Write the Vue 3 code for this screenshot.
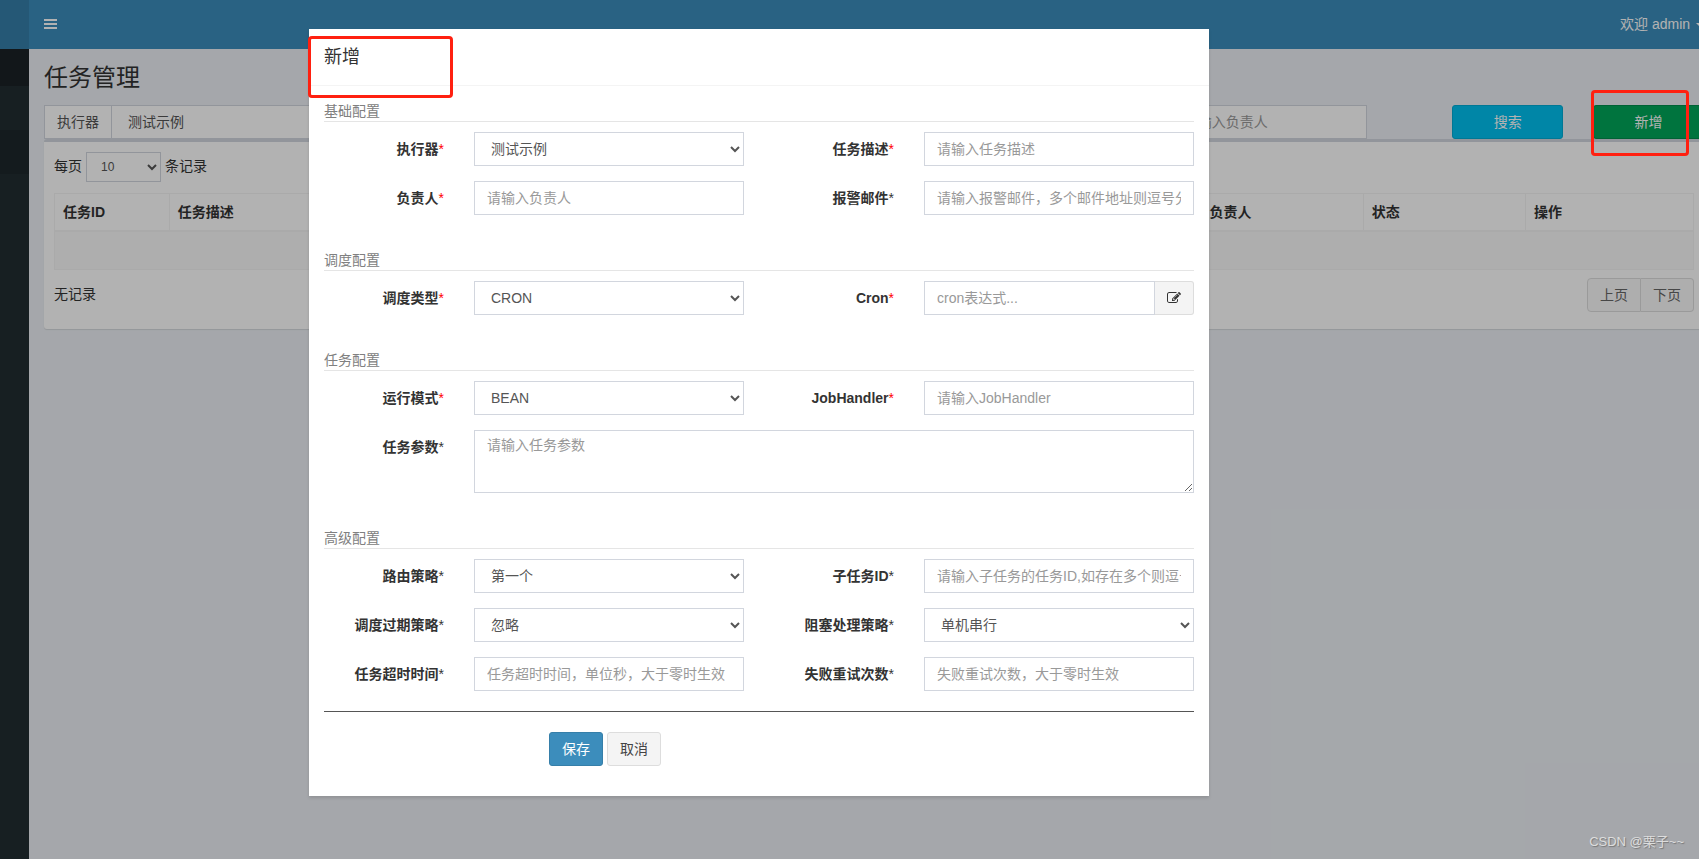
<script setup>
import { ref } from 'vue'

const columns = [
  { title: '任务ID', width: '7%' },
  { title: '任务描述', width: '25%' },
  { title: '调度类型', width: '16%' },
  { title: '运行模式', width: '22%' },
  { title: '负责人', width: '9.9%' },
  { title: '状态', width: '9.9%' },
  { title: '操作', width: '10.2%' }
]

const sections = [
  {
    title: '基础配置',
    fields: [
      { id: 'group', label: '执行器', required: true, type: 'select', option: '测试示例' },
      { id: 'desc', label: '任务描述', required: true, type: 'text', hint: '请输入任务描述' },
      { id: 'author', label: '负责人', required: true, type: 'text', hint: '请输入负责人' },
      { id: 'email', label: '报警邮件', type: 'text', hint: '请输入报警邮件，多个邮件地址则逗号分隔' }
    ]
  },
  {
    title: '调度配置',
    fields: [
      { id: 'schedule', label: '调度类型', required: true, type: 'select', option: 'CRON' },
      { id: 'cron', label: 'Cron', required: true, type: 'cron', hint: 'cron表达式...' }
    ]
  },
  {
    title: '任务配置',
    fields: [
      { id: 'mode', label: '运行模式', required: true, type: 'select', option: 'BEAN' },
      { id: 'handler', label: 'JobHandler', required: true, type: 'text', hint: '请输入JobHandler' },
      { id: 'param', label: '任务参数', type: 'textarea', hint: '请输入任务参数' }
    ]
  },
  {
    title: '高级配置',
    fields: [
      { id: 'route', label: '路由策略', type: 'select', option: '第一个' },
      { id: 'child', label: '子任务ID', type: 'text', hint: '请输入子任务的任务ID,如存在多个则逗号分隔' },
      { id: 'misfire', label: '调度过期策略', type: 'select', option: '忽略' },
      { id: 'block', label: '阻塞处理策略', type: 'select', option: '单机串行' },
      { id: 'timeout', label: '任务超时时间', type: 'text', hint: '任务超时时间，单位秒，大于零时生效' },
      { id: 'retry', label: '失败重试次数', type: 'text', hint: '失败重试次数，大于零时生效' }
    ]
  }
]

const values = ref({})
</script>

<template>
  <div class="viewport">
    <div class="app">
      <header class="topbar">
        <div class="logo"></div>
        <nav class="navbar">
          <button class="toggle" type="button" aria-label="menu">
            <svg width="13" height="14" viewBox="0 0 13 14" fill="#fff">
              <rect y="2" width="13" height="2" /><rect y="6" width="13" height="2" /><rect y="10" width="13" height="2" />
            </svg>
          </button>
          <a class="user" href="#">欢迎 admin <span class="caret"></span></a>
        </nav>
      </header>

      <div class="body">
        <aside class="sidebar">
          <div class="side-head"></div>
          <div class="side-item"></div>
          <div class="side-item active"></div>
        </aside>

        <main class="content">
          <h1>任务管理</h1>
          <div class="filters">
            <div class="filter-group">
              <label class="addon" for="f-group">执行器</label>
              <select id="f-group" class="control"><option>测试示例</option></select>
            </div>
            <input class="control owner" type="text" placeholder="请输入负责人" aria-label="负责人" />
            <button class="btn info search" type="button">搜索</button>
            <button class="btn success add" type="button">新增</button>
          </div>

          <section class="box">
            <div class="length">
              <label for="len">每页</label>
              <select id="len" class="control small"><option>10</option></select>
              <span>条记录</span>
            </div>
            <table>
              <colgroup><col v-for="c in columns" :key="c.title" :style="{ width: c.width }" /></colgroup>
              <thead>
                <tr><th v-for="c in columns" :key="c.title">{{ c.title }}</th></tr>
              </thead>
              <tbody>
                <tr><td :colspan="columns.length">&nbsp;</td></tr>
              </tbody>
            </table>
            <div class="foot">
              <span>无记录</span>
              <div class="pager"><a href="#">上页</a><a href="#">下页</a></div>
            </div>
          </section>
        </main>
      </div>

      <div class="backdrop">
        <div class="modal" role="dialog" aria-labelledby="dlg-title">
          <div class="modal-head"><h4 id="dlg-title">新增</h4></div>
          <form class="modal-body" @submit.prevent>
            <div v-for="s in sections" :key="s.title" class="section">
              <p>{{ s.title }}</p>
              <div class="fields">
                <template v-for="f in s.fields" :key="f.id">
                  <label :for="f.id">{{ f.label }}<span class="star" :class="{ red: f.required }">*</span></label>
                  <select v-if="f.type === 'select'" :id="f.id" class="control"><option>{{ f.option }}</option></select>
                  <textarea v-else-if="f.type === 'textarea'" :id="f.id" v-model="values[f.id]" class="control wide" :placeholder="f.hint"></textarea>
                  <div v-else-if="f.type === 'cron'" class="cron">
                    <input :id="f.id" v-model="values[f.id]" class="control" type="text" :placeholder="f.hint" />
                    <button class="edit" type="button" aria-label="edit">
                      <svg width="14" height="14" viewBox="0 0 1792 1792" fill="#333">
                        <path d="M888 1184l116-116-152-152-116 116v56h96v96h56zm440-720q-16-16-33 1l-350 350q-17 17-1 33t33-1l350-350q17-17 1-33zm80 594v190q0 119-84.500 203.500t-203.500 84.500h-832q-119 0-203.500-84.500t-84.500-203.500v-832q0-119 84.500-203.500t203.500-84.500h832q63 0 117 25 15 7 18 23 3 17-9 29l-49 49q-14 14-32 8-23-6-45-6h-832q-66 0-113 47t-47 113v832q0 66 47 113t113 47h832q66 0 113-47t47-113v-126q0-13 9-22l64-64q15-15 35-7t20 29zm-96-738l288 288-672 672h-288v-288zm444 132l-92 92-288-288 92-92q28-28 68-28t68 28l152 152q28 28 28 68t-28 68z" />
                      </svg>
                    </button>
                  </div>
                  <input v-else :id="f.id" v-model="values[f.id]" class="control" type="text" :placeholder="f.hint" />
                </template>
              </div>
            </div>
            <hr />
            <div class="actions">
              <button class="btn primary" type="submit">保存</button>
              <button class="btn default" type="button">取消</button>
            </div>
          </form>
          <div class="mark mark-title"></div>
        </div>
      </div>
      <div class="mark mark-add"></div>
    </div>
    <div class="watermark">CSDN @栗子~~</div>
  </div>
</template>

<style>
body {
  background: #a5a8ac;
}
</style>

<style scoped>
* {
  box-sizing: border-box;
}
.viewport {
  position: relative;
  min-height: 100vh;
  overflow: hidden;
  font: 14px/20px "Liberation Sans", "Noto Sans CJK SC", sans-serif;
  color: #333;
}
/* The workspace is wider than the window: the menu runs off the left side. */
.app {
  position: relative;
  display: flex;
  flex-direction: column;
  min-height: 100vh;
  margin: 0 -20px 0 -201px;
  background: #ecf0f5;
}
button, input, select, textarea {
  font: inherit;
  margin: 0;
}
a {
  color: inherit;
  text-decoration: none;
}
.topbar {
  display: flex;
  height: 49px;
}
.logo {
  width: 230px;
  background: #367fa9;
}
.navbar {
  flex: 1;
  display: flex;
  align-items: center;
  justify-content: space-between;
  padding: 0 15px 2px;
  background: #3c8dbc;
  color: #fff;
}
.toggle {
  display: flex;
  padding: 0;
  border: 0;
  background: none;
}
.caret {
  display: inline-block;
  margin-left: 2px;
  vertical-align: middle;
  border-top: 4px solid;
  border-left: 4px solid transparent;
  border-right: 4px solid transparent;
}
.body {
  flex: 1;
  display: flex;
}
.sidebar {
  width: 230px;
  background: #222d32;
}
.side-head {
  height: 37px;
  background: #1a2226;
}
.side-item {
  height: 44px;
}
.side-item.active {
  background: #1e282c;
}
.content {
  flex: 1;
  padding: 16px 15px;
}
h1 {
  margin: 0 0 14px;
  font-size: 24px;
  font-weight: 400;
  line-height: 26px;
}
.control {
  display: block;
  width: 100%;
  height: 34px;
  padding: 6px 12px;
  border: 1px solid #d2d6de;
  border-radius: 0;
  background: #fff;
  color: #555;
  outline: none;
}
.control::placeholder {
  color: #999;
  opacity: 1;
}
.filters {
  display: grid;
  grid-template-columns: repeat(12, minmax(0, 1fr));
  column-gap: 30px;
}
.filter-group {
  grid-column: span 3;
  display: flex;
}
.addon {
  flex: none;
  padding: 6px 12px;
  border: 1px solid #d2d6de;
  border-right: 0;
  background: #fff;
  color: #555;
}
.owner {
  grid-column: 9 / span 2;
  width: 78%;
}
.search {
  grid-column: 11;
}
.add {
  grid-column: 12;
}
.btn {
  height: 34px;
  padding: 6px 12px;
  border: 1px solid;
  border-radius: 3px;
}
.info {
  background: #00c0ef;
  border-color: #00acd6;
  color: #fff;
}
.success {
  background: #00a65a;
  border-color: #008d4c;
  color: #fff;
}
.primary {
  background: #3c8dbc;
  border-color: #367fa9;
  color: #fff;
}
.default {
  background: #f4f4f4;
  border-color: #ddd;
  color: #444;
}
.box {
  padding: 10px 10px 17px;
  border-top: 3px solid #d2d6de;
  border-radius: 3px;
  background: #fff;
  box-shadow: 0 1px 1px rgba(0, 0, 0, 0.1);
}
.length {
  display: flex;
  gap: 4px;
  margin-bottom: 11px;
  line-height: 28px;
}
.small {
  width: 75px;
  height: 30px;
  padding: 5px 10px;
  font-size: 12px;
}
table {
  width: 100%;
  table-layout: fixed;
  border-collapse: separate;
  border-spacing: 0;
  border: 1px solid #f4f4f4;
}
th, td {
  padding: 8px;
  text-align: left;
}
th {
  border-bottom: 2px solid #f4f4f4;
  border-right: 1px solid #f4f4f4;
}
th:last-child {
  border-right: 0;
}
td {
  height: 37px;
  background: #f9f9f9;
}
.foot {
  display: flex;
  justify-content: space-between;
  padding-top: 8px;
}
.foot > span {
  padding-top: 6px;
}
.pager {
  display: flex;
}
.pager a {
  padding: 6px 12px;
  border: 1px solid #ddd;
  background: #fafafa;
  color: #666;
}
.pager a:first-child {
  border-radius: 4px 0 0 4px;
}
.pager a:last-child {
  border-left: 0;
  border-radius: 0 4px 4px 0;
}
.backdrop {
  position: absolute;
  inset: 0;
  display: flex;
  justify-content: center;
  align-items: flex-start;
  padding-top: 29px;
  background: rgba(0, 0, 0, 0.3);
}
.modal {
  position: relative;
  width: 900px;
  background: #fff;
  box-shadow: 0 2px 3px rgba(0, 0, 0, 0.125);
}
.modal-head {
  padding: 16px 15px 15px;
  border-bottom: 1px solid #f4f4f4;
}
h4 {
  margin: 0;
  font-size: 18px;
  font-weight: 400;
  line-height: 25px;
}
.modal-body {
  padding: 15px 15px 30px;
}
.section + .section {
  margin-top: 35px;
}
.section p {
  margin: 0 0 10px;
  border-bottom: 1px solid #e5e5e5;
  color: #808080;
}
.fields {
  display: grid;
  grid-template-columns: minmax(0, 4fr) minmax(0, 9fr) minmax(0, 4fr) minmax(0, 9fr);
  gap: 15px 30px;
}
.fields label {
  padding-top: 7px;
  font-weight: 700;
  text-align: right;
}
.star {
  font-weight: 400;
}
.red {
  color: red;
}
.wide {
  grid-column: span 3;
  height: 63px;
  padding-top: 4px;
  resize: both;
}
.cron {
  display: flex;
}
.cron .control {
  flex: 1;
  min-width: 0;
}
.edit {
  display: flex;
  align-items: center;
  justify-content: center;
  width: 39px;
  padding: 0;
  border: 1px solid #ddd;
  border-left: 0;
  border-radius: 0 3px 3px 0;
  background: #f4f4f4;
}
hr {
  height: 1px;
  margin: 20px 0;
  border: 0;
  background: #555;
}
.actions {
  display: flex;
  gap: 4px;
  padding-left: 225px;
}
.mark {
  position: absolute;
  border: 3px solid #ff2010;
  border-radius: 4px;
}
.mark-title {
  top: 7px;
  left: -1px;
  width: 145px;
  height: 62px;
}
.mark-add {
  top: 90px;
  right: 30px;
  width: 98px;
  height: 66px;
}
.watermark {
  position: absolute;
  right: 15px;
  bottom: 7px;
  color: #ddd;
  font-size: 13px;
  text-shadow: 1px 1px 1px #777;
}
</style>
